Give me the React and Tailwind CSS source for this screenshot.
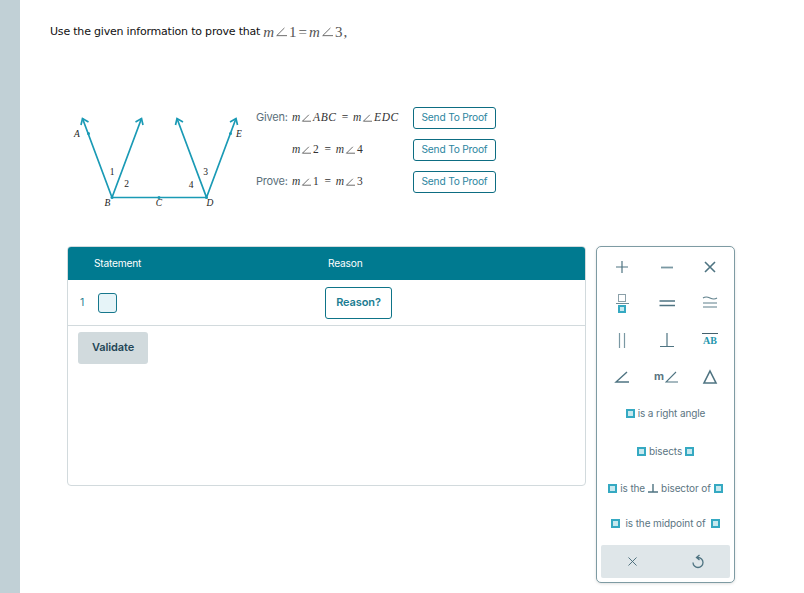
import React from 'react';
import { X } from 'lucide-react';

const ui = "font-['Inter',sans-serif]";
const serif = "font-['Liberation_Serif',serif]";

const Box = () => (
  <span className="inline-block w-[9px] h-[9px] border-2 border-[#35a9c2] bg-[#c8e9ef] shrink-0" />
);

const Angle = ({ size = 11 }) => (
  <svg width={size} height={size * 0.8} viewBox="0 0 14 11" fill="none" stroke="currentColor" strokeWidth="1" className="inline-block">
    <path d="M11 1 L2 10 L14 10" />
  </svg>
);

const Math2 = ({ left, right, italic }) => (
  <span className={`${serif} text-[11.5px] text-[#333] inline-flex items-center gap-[1px] whitespace-nowrap`}>
    <i className="text-[#333]">m</i><Angle size={10} />
    <span className={`${italic ? 'italic' : ''} tracking-[0.6px] ml-[1px]`}>{left}</span>
    <span className="mx-[4px]">=</span>
    <i className="text-[#333]">m</i><Angle size={10} />
    <span className={`${italic ? 'italic' : ''} tracking-[0.6px] ml-[1px]`}>{right}</span>
  </span>
);

const Figure = () => (
  <svg width="200" height="120" viewBox="60 100 200 120" className="shrink-0">
    <g stroke="#1a9ab5" strokeWidth="1.7" fill="none">
      <path d="M112 197.5 L82.5 118.5 M112 197.5 L141.5 118.5 M112 197.5 H206.5 L177 118.5 M206.5 197.5 L236 118.5" />
      <path d="M81 125 L82.5 118.5 L88.5 122 M135.5 122 L141.5 118.5 L143 125 M175.5 125 L177 118.5 L183 122 M230 122 L236 118.5 L237.5 125" />
    </g>
    <g fill="#1a9ab5">
      <circle cx="88.5" cy="133.5" r="1.5" />
      <circle cx="230.5" cy="133.5" r="1.5" />
      <circle cx="159" cy="197.5" r="1.5" />
      <circle cx="112" cy="197.5" r="1.5" />
      <circle cx="206.5" cy="197.5" r="1.5" />
    </g>
    <g fontFamily="Liberation Serif" fontSize="9.5" fill="#222" textAnchor="middle">
      <text x="77" y="136.5" fontStyle="italic">A</text>
      <text x="239" y="136.5" fontStyle="italic">E</text>
      <text x="107.5" y="206" fontStyle="italic">B</text>
      <text x="159" y="206" fontStyle="italic">C</text>
      <text x="210" y="206" fontStyle="italic">D</text>
      <text x="112" y="175">1</text>
      <text x="126.5" y="187">2</text>
      <text x="205.5" y="175">3</text>
      <text x="191" y="188">4</text>
    </g>
  </svg>
);

const SendButton = () => (
  <button className="w-[83px] h-[22px] pb-px border border-[#0d6d82] rounded-[3px] text-[10.2px] tracking-[-0.2px] text-[#2b85a0] bg-white leading-none">
    Send To Proof
  </button>
);

const Sym = ({ children }) => <div className="h-[36px] flex items-center justify-center text-[#4a6f7d]">{children}</div>;

const Stroke = ({ d, w = 16, h = 16, sw = 1.4, color = '#4f7482' }) => (
  <svg width={w} height={h} viewBox={`0 0 ${w} ${h}`} fill="none" stroke={color} strokeWidth={sw}>
    <path d={d} />
  </svg>
);

const Phrase = ({ children, h }) => (
  <div className={`${h} flex items-center justify-center gap-[3px] text-[10px] tracking-[-0.1px] text-[#5b7582] whitespace-nowrap`}>
    {children}
  </div>
);

const Palette = () => (
  <div className="w-[139px] h-[337px] border border-[#7e9ba3] rounded-[5px] bg-white shadow-[0_1px_3px_rgba(0,0,0,0.12)] flex flex-col shrink-0">
    <div className="grid grid-cols-[50px_39px_48px] pt-[2px]">
      <Sym><Stroke d="M8 2 V14 M2 8 H14" sw="1.2" /></Sym>
      <Sym><Stroke d="M2 8.5 H14" sw="1.8" color="#7a98a3" /></Sym>
      <Sym><Stroke d="M3 3 L13 13 M13 3 L3 13" sw="1.6" /></Sym>
      <Sym>
        <div className="flex flex-col items-center">
          <span className="w-[8px] h-[8px] border border-[#8ba0a9] bg-white" />
          <span className="w-[13px] h-px bg-[#6c8b97] my-[1px]" />
          <span className="w-[8px] h-[8px] border-2 border-[#35a9c2] bg-[#c8e9ef]" />
        </div>
      </Sym>
      <Sym><Stroke d="M0.5 6 H16 M0.5 10.5 H16" sw="1.3" /></Sym>
      <Sym><Stroke d="M1 3 Q4 1 8 3 T15 3 M1 8 H15 M1 12 H15" sw="1.1" color="#5f808c" /></Sym>
      <Sym><div className="mt-[2px]"><Stroke d="M5.5 1 V16 M10.5 1 V16" sw="1.2" color="#7a98a3" /></div></Sym>
      <Sym><div className="mt-[2px]"><Stroke d="M8 1 V14.5 M1 14.5 H15" sw="1.2" /></div></Sym>
      <Sym>
        <span className={`${serif} mt-[2px] text-[10px] font-bold text-[#2596ad] border-t border-[#44606c] leading-[13px] px-[1px]`}>AB</span>
      </Sym>
      <Sym><div className="mt-[3px]"><Stroke d="M13 3 L2 13 H15" sw="1.4" /></div></Sym>
      <Sym>
        <div className="mt-[3px] flex items-center">
          <span className="text-[11px] font-bold text-[#5b7582] mr-px">m</span>
          <Stroke d="M11 3 L1 13 H13" w={14} sw="1.1" />
        </div>
      </Sym>
      <Sym><div className="mt-[3px]"><Stroke d="M8 2 L14 14 H2 Z" sw="1.6" /></div></Sym>
    </div>
    <div className="flex flex-col mt-[1px]">
      <Phrase h="h-[39px]"><Box />is a right angle</Phrase>
      <Phrase h="h-[37px]"><Box />bisects<Box /></Phrase>
      <Phrase h="h-[36px]">
        <Box />is the<Stroke d="M5 1 V9 M0 9 H10" w={10} h={10} sw="1.4" />bisector of<Box />
      </Phrase>
      <Phrase h="h-[34px]"><Box /><span className="mx-[2px]">is the midpoint of</span><Box /></Phrase>
    </div>
    <div className="mt-[5px] mx-[4px] h-[33px] bg-[#dfe6e9] rounded-[2px] grid grid-cols-2 items-center justify-items-center text-[#3f6472]">
      <X size={15} strokeWidth={1.4} className="mr-[2px]" />
      <div className="mr-[2px]">
        <Stroke d="M7 3.5 H8 A5 5 0 1 1 3 8.5 M9.5 1 L6.5 3.5 L9.5 6" w={14} h={15} sw="1.3" />
      </div>
    </div>
  </div>
);

const ProofTable = () => (
  <div className="w-[519px] h-[240px] border border-[#d2dadd] rounded-[4px] bg-white overflow-hidden shrink-0">
    <div className="h-[33px] bg-[#007a90] grid grid-cols-[260px_1fr] items-center text-white text-[10.2px] tracking-[-0.2px]">
      <span className="pl-[26px]">Statement</span>
      <span>Reason</span>
    </div>
    <div className="h-[46px] border-b border-[#d2dadd] grid grid-cols-[257px_1fr] items-center">
      <div className="flex items-center pl-[12px] text-[10.5px] text-[#2b7f92]">
        <span className="w-[18px]">1</span>
        <span className="w-[19px] h-[20px] border border-[#16778c] rounded-[3px] bg-[#e6f4f8]" />
      </div>
      <button className="w-[67px] h-[32px] pb-px border border-[#0e7488] rounded-[3px] text-[11px] font-semibold tracking-[-0.1px] text-[#1b7d92]">
        Reason?
      </button>
    </div>
    <button className="ml-[10px] mt-[6px] w-[70px] h-[32px] pb-[2px] bg-[#d1dadd] rounded-[3px] text-[11px] font-semibold tracking-[-0.1px] text-[#234656]">
      Validate
    </button>
  </div>
);

const App = () => {
  return (
    <div className={`w-[804px] h-[593px] overflow-hidden flex bg-white ${ui}`}>
      <div className="w-5 bg-[#c1d0d6] shrink-0" />
      <div className="flex-1 flex flex-col">
        <p className="ml-[30px] mt-[22px] h-[20px] flex items-center text-[11px] tracking-[-0.2px] text-[#111] font-['DejaVu_Sans',sans-serif] whitespace-nowrap">
          Use the given information to prove that
          <span className={`${serif} text-[15px] tracking-normal text-[#555] inline-flex items-center ml-[3px] gap-[1px]`}>
            <i>m</i><Angle size={12} /><span className="ml-[1px]">1</span><span className="mx-[1px]">=</span>
            <i>m</i><Angle size={12} /><span className="ml-[1px] tracking-[1px]">3,</span>
          </span>
        </p>
        <div className="flex mt-[58px] h-[126px] ml-[40px]">
          <Figure />
          <div className="ml-[-4px] mt-[7px] grid grid-cols-[36px_121px_83px] auto-rows-[22px] gap-y-[10px] items-center text-[11px] tracking-[-0.2px] text-[#5a6f7a]">
            <span className="pb-[2px]">Given:</span>
            <Math2 left="ABC" right="EDC" italic />
            <SendButton />
            <span />
            <Math2 left="2" right="4" />
            <SendButton />
            <span className="pb-[2px]">Prove:</span>
            <Math2 left="1" right="3" />
            <SendButton />
          </div>
        </div>
        <div className="flex gap-[10px] ml-[47px] mt-[20px] items-start">
          <ProofTable />
          <Palette />
        </div>
      </div>
    </div>
  );
};

export default App;
